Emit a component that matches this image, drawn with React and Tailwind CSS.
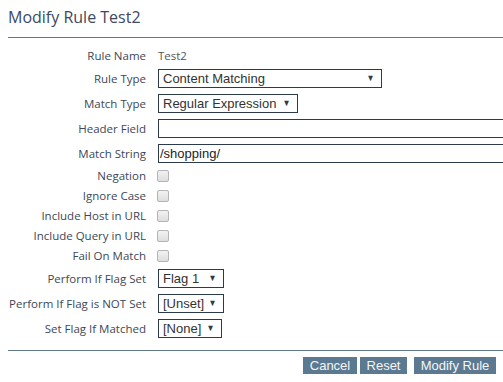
import React from "react";

const label = "shrink-0 w-[138px] text-right text-[11.5px] text-[#3d4756] leading-none whitespace-nowrap";
const font = { fontFamily: "'Open Sans', 'DejaVu Sans', sans-serif" };

function Select({ value, w }) {
  return (
    <div
      className={`shrink-0 h-[19px] border border-[#2c3b4c] flex items-center justify-between pl-[4px] pr-[6px] text-[13px] text-[#333] ${w}`}
      style={{ fontFamily: "'Liberation Sans', Arial, sans-serif" }}
    >
      <span>{value}</span>
      <span className="text-[9px] text-[#2f3b47] scale-x-90">▼</span>
    </div>
  );
}

function Row({ name, h = "h-[25px]", children }) {
  return (
    <div className={`flex items-center ${h}`}>
      <div className={label}>{name}</div>
      <div className="ml-[12px] flex items-center">{children}</div>
    </div>
  );
}

function Check() {
  return (
    <div className="ml-[-1px] w-[12px] h-[12px] rounded-[2px] border border-[#b4b4b4] bg-gradient-to-b from-[#f2f2f2] to-[#dedede]" />
  );
}

export default function App() {
  return (
    <div className="w-[503px] h-[382px] overflow-hidden bg-white" style={font}>
      <div className="ml-[8px] w-[520px]">
        <div className="h-[37px] pt-[6px] text-[16px] text-[#3b4a5e] leading-[22px]">
          Modify Rule Test2
        </div>
        <div className="h-px bg-[#617888]" />
        <div className="mt-[8px]">
          <Row name="Rule Name" h="h-[20px]">
            <span className="text-[11.5px] text-[#555]">Test2</span>
          </Row>
          <Row name="Rule Type">
            <Select value="Content Matching" w="w-[224px]" />
          </Row>
          <Row name="Match Type">
            <Select value="Regular Expression" w="w-[140px]" />
          </Row>
          <Row name="Header Field">
            <div className="shrink-0 h-[19px] w-[400px] border border-[#2c3b4c]" />
          </Row>
          <Row name="Match String">
            <div
              className="shrink-0 h-[19px] w-[400px] border border-[#2c3b4c] flex items-center text-[13px] text-[#222] pl-px"
              style={{ fontFamily: "'Liberation Sans', Arial, sans-serif" }}
            >
              /shopping/
            </div>
          </Row>
          <Row name="Negation" h="h-[20px]"><Check /></Row>
          <Row name="Ignore Case" h="h-[20px]"><Check /></Row>
          <Row name="Include Host in URL" h="h-[20px]"><Check /></Row>
          <Row name="Include Query in URL" h="h-[20px]"><Check /></Row>
          <Row name="Fail On Match" h="h-[20px]"><Check /></Row>
          <Row name="Perform If Flag Set">
            <Select value="Flag 1" w="w-[66px]" />
          </Row>
          <Row name="Perform If Flag is NOT Set">
            <Select value="[Unset]" w="w-[66px]" />
          </Row>
          <Row name="Set Flag If Matched">
            <Select value="[None]" w="w-[64px]" />
          </Row>
        </div>
        <div className="mt-[9px] h-px bg-[#617888]" />
        <div
          className="w-[488px] mt-[6px] flex justify-end text-[13px] text-[#f4f6f8]"
          style={{ fontFamily: "'Liberation Sans', Arial, sans-serif" }}
        >
          <div className="h-[17px] w-[54px] bg-[#5b7a92] flex items-center justify-center">Cancel</div>
          <div className="ml-[3px] h-[17px] w-[47px] bg-[#5b7a92] flex items-center justify-center">Reset</div>
          <div className="ml-[7px] h-[17px] w-[82px] bg-[#5b7a92] flex items-center justify-center">Modify Rule</div>
        </div>
      </div>
    </div>
  );
}
